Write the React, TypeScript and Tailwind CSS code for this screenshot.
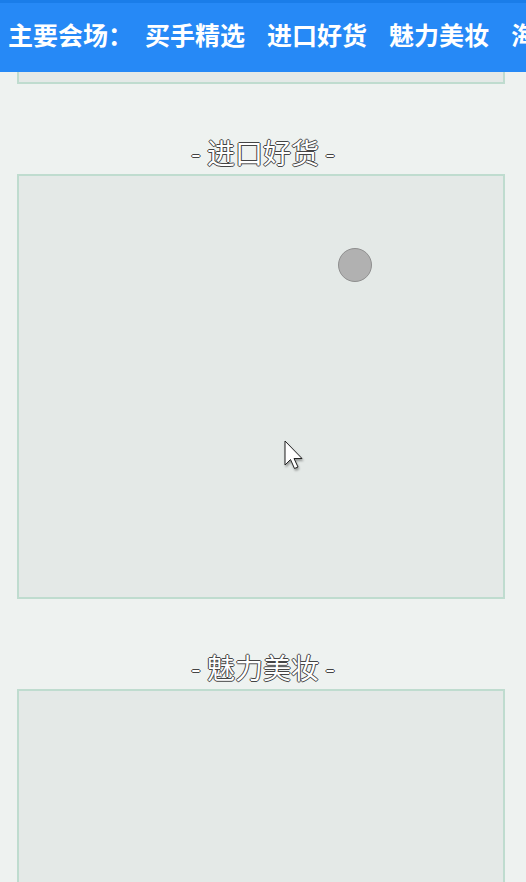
import React from "react";

const font = { fontFamily: '"Noto Sans CJK SC", "Noto Sans", sans-serif' };

function Title({ text }: { text: string }) {
  return (
    <div
      className="mt-[48px] h-[40px] flex items-center justify-center text-[28px] font-normal leading-[40px] text-white [text-shadow:1px_0_#444,-1px_0_#444,0_1px_#444,0_-1px_#444]"
      style={font}
    >
      - {text} -
    </div>
  );
}

export default function App() {
  return (
    <div className="w-[526px] h-[882px] overflow-hidden bg-[#eef2f0] relative" style={font}>
      <div className="h-[72px] bg-[#2689f6] border-t-[3px] border-[#1a7de9] flex items-center pl-[8px] pb-[6px] whitespace-nowrap overflow-hidden text-white font-bold text-[25px] leading-none">
        <span className="mr-[12px] shrink-0">主要会场：</span>
        <div className="flex gap-[22px] shrink-0">
          <span>买手精选</span>
          <span>进口好货</span>
          <span>魅力美妆</span>
          <span>海外直邮</span>
        </div>
      </div>
      <div className="ml-[17px] w-[488px] h-[12px] border-2 border-t-0 border-[#bfdccf] bg-[#e4e9e7]" />
      <Title text="进口好货" />
      <div className="mt-[2px] ml-[17px] w-[488px] h-[425px] border-2 border-[#bfdccf] bg-[#e4e9e7] relative">
        <div className="absolute left-[319px] top-[72px] w-[34px] h-[34px] rounded-full bg-[#b1b1b1] border border-[#8f8f8f]" />
        <svg className="absolute left-[264px] top-[264px]" width="24" height="36" viewBox="0 0 24 36">
          <defs>
            <filter id="s" x="-50%" y="-50%" width="200%" height="200%">
              <feDropShadow dx="1" dy="2" stdDeviation="1.2" floodColor="#000" floodOpacity="0.35" />
            </filter>
          </defs>
          <path
            d="M2 1 L2 25 L7.5 19.5 L11.5 28.5 L15 27 L11 18.5 L19 18.5 Z"
            fill="#fff"
            stroke="#222"
            strokeWidth="1"
            strokeLinejoin="round"
            filter="url(#s)"
          />
        </svg>
      </div>
      <Title text="魅力美妆" />
      <div className="mt-[2px] ml-[17px] w-[488px] h-[425px] border-2 border-[#bfdccf] bg-[#e4e9e7]" />
    </div>
  );
}
